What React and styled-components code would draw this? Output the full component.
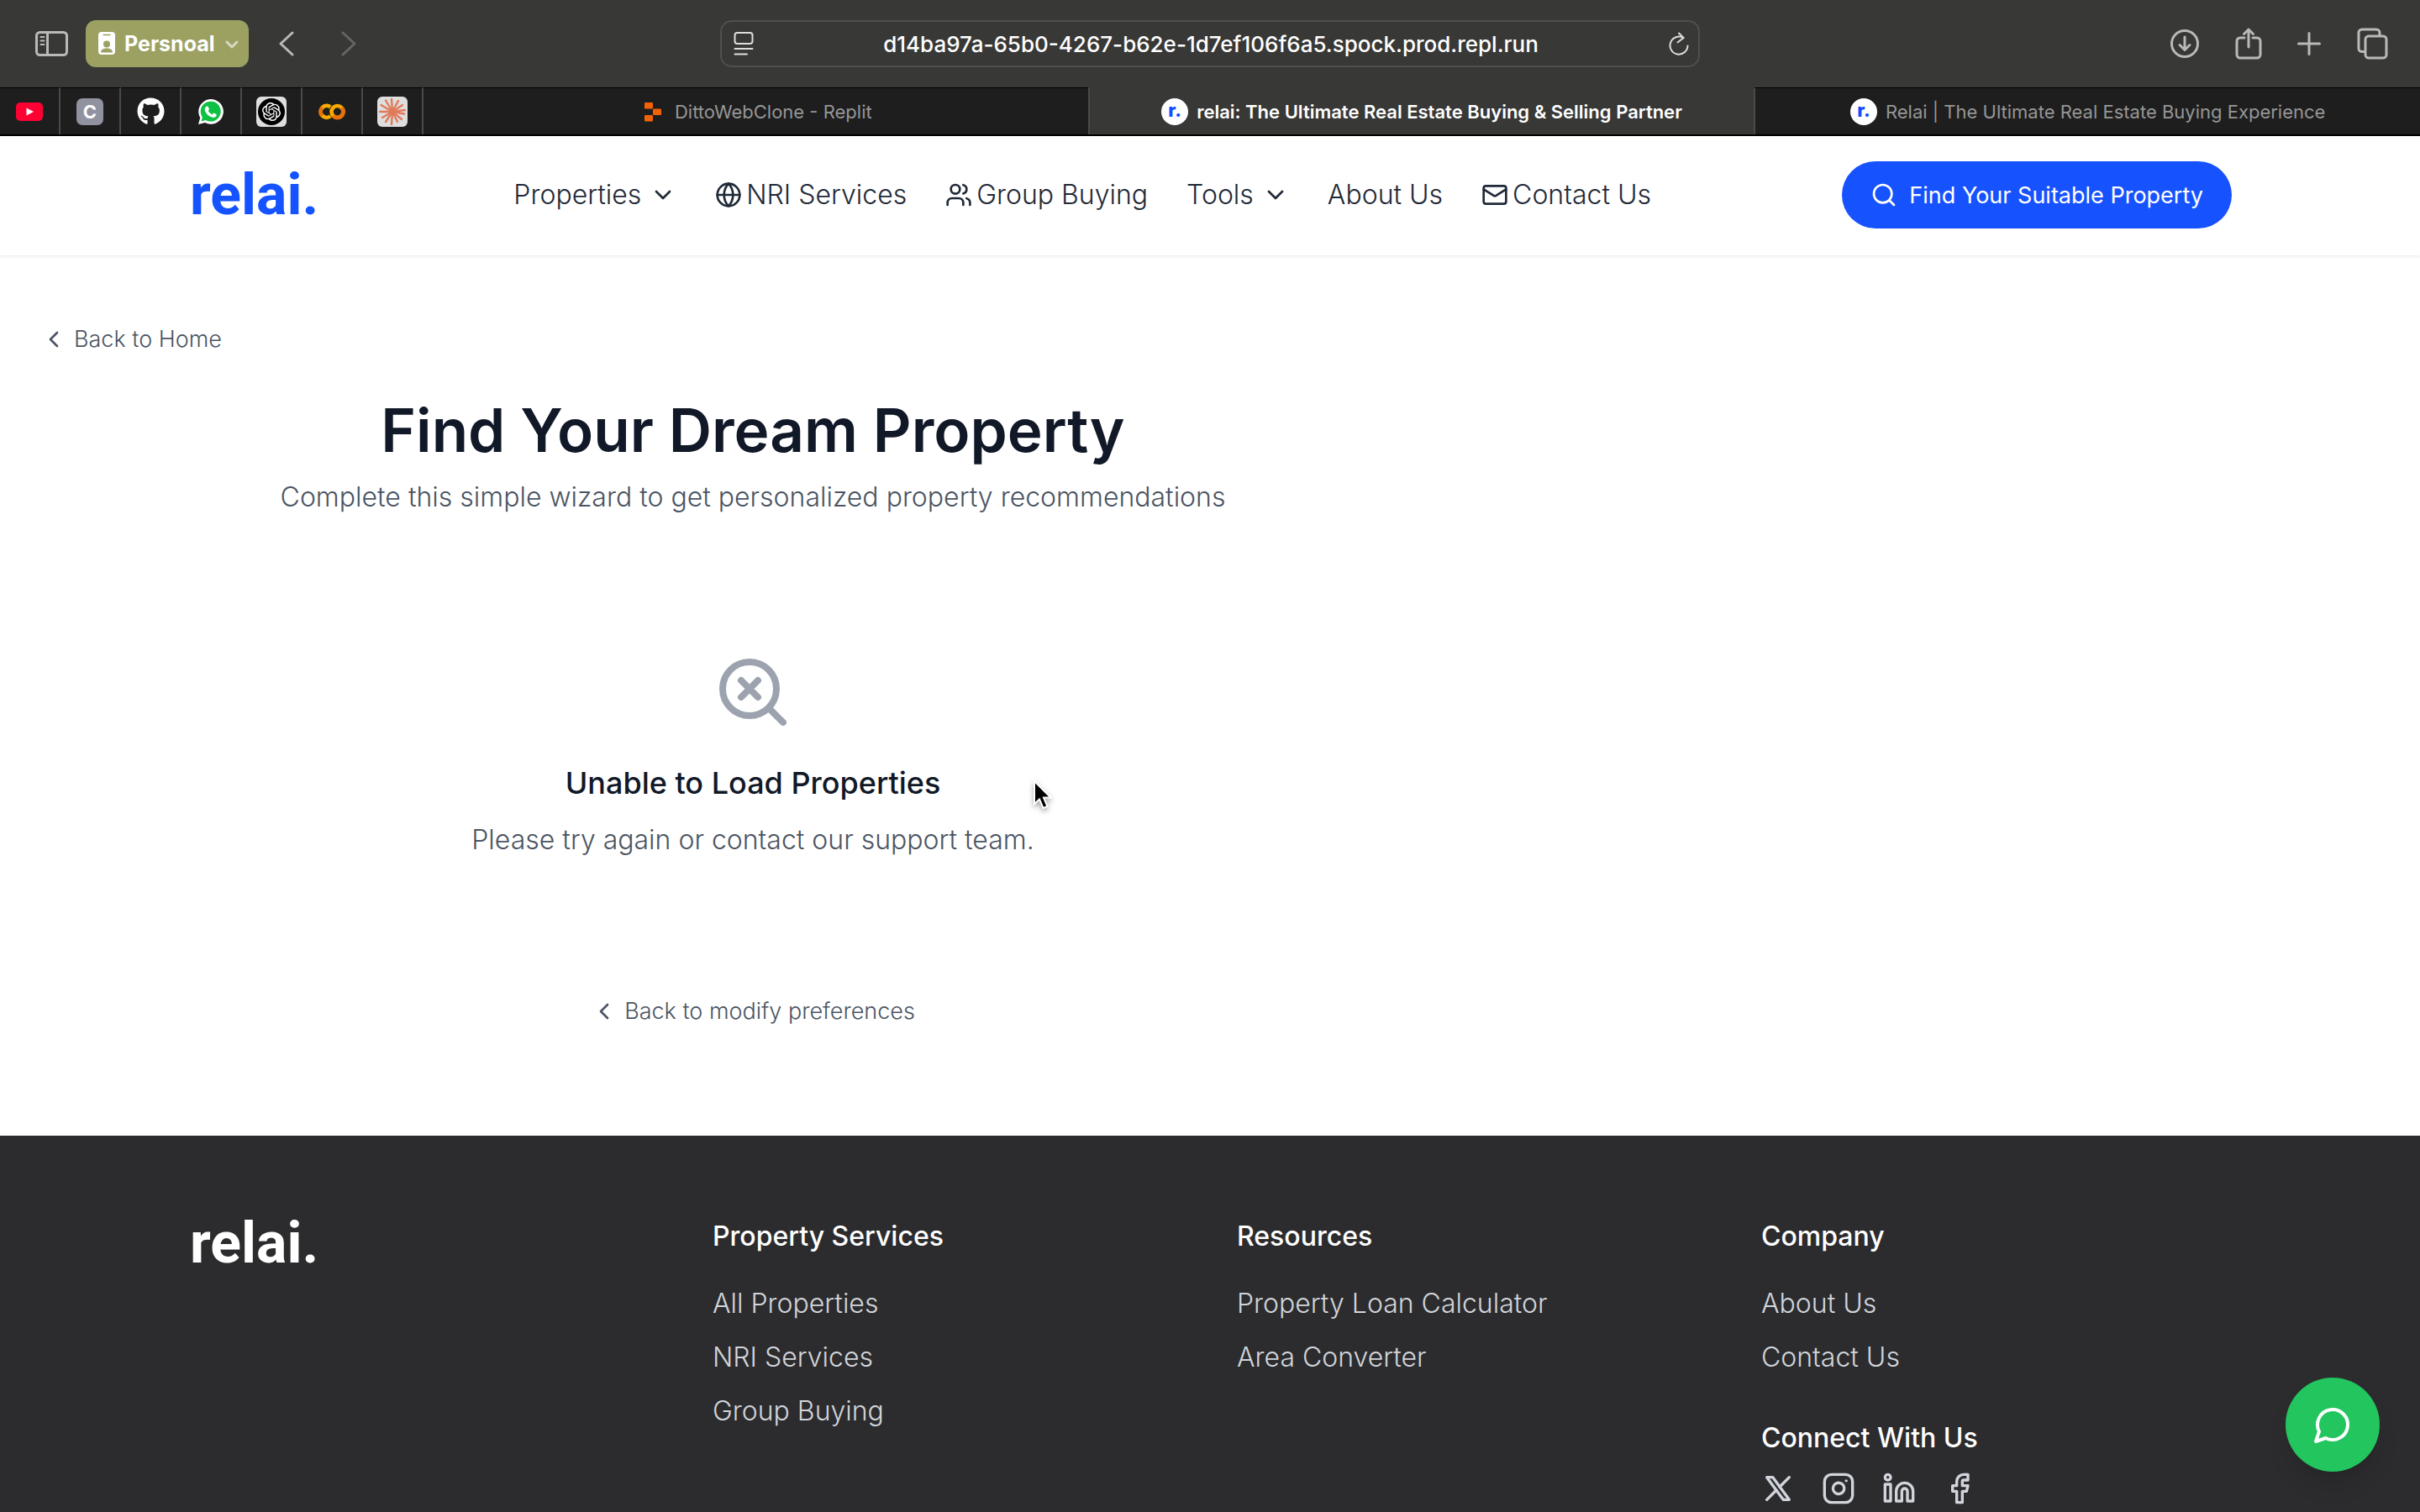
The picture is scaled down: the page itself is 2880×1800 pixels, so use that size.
import React from "react";
import styled, { createGlobalStyle } from "styled-components";
import { ChevronDown, ChevronLeft, Facebook, Globe, Instagram, Linkedin, Mail, Search } from "lucide-react";
import { FaGithub } from "react-icons/fa";
import { SiOpenai } from "react-icons/si";

const GlobalStyle = createGlobalStyle`
  *, *::before, *::after { box-sizing: border-box; }
  body { margin: 0; background: #fff; font-family: Inter, "Liberation Sans", sans-serif; }
  button, input { font: inherit; }
  svg { display: block; flex: none; }
`;

const Page = styled.div`
  min-height: 100vh;
  display: flex;
  flex-direction: column;
`;

/* Browser chrome */
const Chrome = styled.div`
  background: #383836;
  color: #b9b9b7;
  border-bottom: 2px solid #000;
`;

const Toolbar = styled.div`
  height: 104px;
  display: grid;
  grid-template-columns: 1fr minmax(0, 1166px) 1fr;
  align-items: center;
`;

const ToolGroup = styled.div`
  display: flex;
  align-items: center;
  justify-content: ${(p) => (p.$end ? "flex-end" : "flex-start")};
  gap: ${(p) => p.$gap}px;
  padding: 0 38px 0 36px;
`;

const IconButton = styled.button`
  border: 0;
  padding: 0;
  background: none;
  color: inherit;
  display: flex;
  align-items: center;
  justify-content: center;
  opacity: ${(p) => (p.$dim ? 0.35 : 1)};
`;

const ProfileButton = styled.button`
  height: 56px;
  border: 0;
  border-radius: 12px;
  padding: 0 10px 0 14px;
  display: flex;
  align-items: center;
  gap: 10px;
  background: #9ca162;
  color: #fff;
  font-size: 25px;
  font-weight: 700;
`;

const AddressBar = styled.div`
  height: 56px;
  border: 2px solid #4f4f4d;
  border-radius: 14px;
  display: flex;
  align-items: center;
  padding: 0 10px 0 14px;
  color: #dededc;
`;

const AddressInput = styled.input`
  flex: 1;
  min-width: 0;
  border: 0;
  outline: 0;
  background: none;
  color: #fff;
  text-align: center;
  font-size: 26px;
  font-weight: 450;
`;

const TabStrip = styled.div`
  display: flex;
  height: 56px;
`;

const PinnedTab = styled.button`
  width: 72px;
  border: 0;
  border-top: 1px solid #000;
  border-right: 2px solid #4a4a48;
  padding: 0;
  background: #1e1e1e;
  display: flex;
  align-items: center;
  justify-content: center;
`;

const Tab = styled.button`
  flex: 1;
  min-width: 0;
  border: 0;
  border-top: 1px solid ${(p) => (p.$active ? "#383836" : "#000")};
  & + & { border-left: 2px solid #4a4a48; }
  background: ${(p) => (p.$active ? "#383836" : "#1e1e1e")};
  color: ${(p) => (p.$active ? "#fff" : "#969696")};
  font-size: 22px;
  font-weight: ${(p) => (p.$active ? 600 : 400)};
  display: flex;
  align-items: center;
  justify-content: center;
  gap: 10px;
  white-space: nowrap;
`;

const RelaiFavicon = styled.span`
  width: 32px;
  height: 32px;
  border-radius: 50%;
  background: #fff;
  color: #0f4dff;
  font-size: 22px;
  line-height: 28px;
  font-weight: 800;
  text-align: center;
`;

const LetterFavicon = styled.span`
  width: 32px;
  height: 32px;
  border-radius: 7px;
  background: #9192a0;
  color: #fff;
  font-size: 22px;
  line-height: 32px;
  font-weight: 700;
`;

const PlateFavicon = styled.span`
  width: 36px;
  height: 36px;
  border-radius: 6px;
  background: #dedede;
  display: flex;
  align-items: center;
  justify-content: center;
`;

const BlackDisc = styled.span`
  width: 32px;
  height: 32px;
  border-radius: 50%;
  background: #000;
  color: #fff;
  display: flex;
  align-items: center;
  justify-content: center;
`;

/* Site header */
const Header = styled.header`
  display: flex;
  align-items: center;
  justify-content: space-between;
  padding: 30px 224px 32px;
  background: #fff;
  box-shadow: 0 1px 4px rgba(0, 0, 0, 0.1);
`;

const Logo = styled.a`
  width: 160px;
  padding-left: 2px;
  font-family: Roboto, "Liberation Sans", sans-serif;
  font-size: 68px;
  line-height: 64px;
  font-weight: 700;
  text-decoration: none;
  color: ${(p) => (p.$light ? "#fff" : "#1453ff")};
`;

const Nav = styled.nav`
  display: flex;
  align-items: center;
  gap: 46px;
`;

const navItem = `
  display: flex;
  align-items: center;
  border: 0;
  padding: 0;
  background: none;
  color: #1f2937;
  font-size: 32px;
  line-height: 48px;
  font-weight: 300;
  text-decoration: none;
  white-space: nowrap;
`;
const NavLink = styled.a`${navItem} gap: 5px;`;
const NavMenu = styled.button`${navItem} gap: 10px;`;

const SearchButton = styled.button`
  height: 80px;
  border: 0;
  border-radius: 40px;
  padding: 0 34px;
  display: flex;
  align-items: center;
  gap: 14px;
  background: #1752ff;
  color: #fff;
  font-size: 27px;
  font-weight: 400;
  white-space: nowrap;
`;

/* Page content */
const Main = styled.main`
  padding: 80px 0 128px;
`;

const BackLink = styled.a`
  display: flex;
  align-items: center;
  gap: 8px;
  color: #4b5563;
  font-size: 27px;
  line-height: 40px;
  font-weight: 300;
  text-decoration: none;
`;

const BackRow = styled.div`
  display: flex;
  padding: 0 48px;
`;

const Wizard = styled.section`
  max-width: 1792px;
  padding-top: 48px;
  display: flex;
  flex-direction: column;
  align-items: center;
  text-align: center;
`;

const Title = styled.h1`
  margin: 0 0 16px;
  color: #111827;
  font-size: 71px;
  line-height: 80px;
  font-weight: 600;
`;

const Lead = styled.p`
  margin: 0;
  color: #4b5563;
  font-size: 32px;
  line-height: 48px;
  font-weight: 300;
`;

const EmptyState = styled.div`
  padding: 160px 0;
  display: flex;
  flex-direction: column;
  align-items: center;
  color: #9ca3af;
`;

const EmptyTitle = styled.h2`
  margin: 32px 0 16px;
  color: #111827;
  font-size: 36px;
  line-height: 56px;
  font-weight: 500;
`;

/* Footer */
const Footer = styled.footer`
  flex: 1;
  padding: 96px 224px 0;
  background: #2c2c2e;
  display: grid;
  grid-template-columns: repeat(4, 1fr);
  gap: 64px;
`;

const FooterHeading = styled.h3`
  margin: 0;
  color: #fff;
  font-size: 32px;
  line-height: 48px;
  font-weight: 500;
`;

const FooterList = styled.ul`
  list-style: none;
  margin: 32px 0 48px;
  padding: 0;
  display: grid;
  gap: 16px;
`;

const FooterLink = styled.a`
  display: block;
  color: #d1d5db;
  font-size: 32px;
  line-height: 48px;
  font-weight: 300;
  text-decoration: none;
`;

const SocialRow = styled.div`
  display: flex;
  gap: 32px;
  margin-top: 16px;
`;

const SocialLink = styled.a`
  color: #d1d5db;
`;

const ChatButton = styled.button`
  position: fixed;
  right: 48px;
  bottom: 48px;
  width: 112px;
  height: 112px;
  border: 0;
  border-radius: 50%;
  background: #22c55e;
  color: #fff;
  display: flex;
  align-items: center;
  justify-content: center;
  box-shadow: 0 20px 30px -6px rgba(0, 0, 0, 0.12), 0 8px 12px -8px rgba(0, 0, 0, 0.12);
`;

const Pointer = styled.svg`
  position: absolute;
  left: 1228px;
  top: 928px;
  filter: drop-shadow(0 3px 3px rgba(0, 0, 0, 0.35));
`;

const Stroke = ({ w, h, width = 3, children }) => (
  <svg width={w} height={h} viewBox={`0 0 ${w} ${h}`} fill="none" stroke="currentColor" strokeWidth={width} strokeLinecap="round" strokeLinejoin="round" aria-hidden="true">
    {children}
  </svg>
);

const SidebarIcon = () => (
  <Stroke w={50} h={32}>
    <rect x="7.5" y="2.5" width="36" height="27" rx="4" />
    <path d="M20.5 3v26" />
    <path d="M12.500 8h4M12.500 12.500h4M12.500 17h4" strokeWidth="2" />
  </Stroke>
);

const BadgeIcon = () => (
  <svg width="22" height="28" viewBox="0 0 22 28" aria-hidden="true">
    <rect x="1" y="0" width="20" height="27" rx="4" fill="#fff" />
    <path d="M7 3.500h8" stroke="#9ca162" strokeWidth="1.500" strokeLinecap="round" />
    <circle cx="11" cy="14.500" r="4" fill="#9ca162" />
    <path d="M4 24.500c0-3.400 3-4.900 7-4.900s7 1.500 7 4.900z" fill="#9ca162" />
  </svg>
);

const ReaderIcon = () => (
  <Stroke w={24} h={30} width={2}>
    <rect x="1.500" y="2" width="21" height="13" rx="3" />
    <path d="M1.500 21h21M1.500 27.500h14.500" />
  </Stroke>
);

const ReloadIcon = () => (
  <Stroke w={26} h={30} width={2}>
    <path d="M18.500 8.200A10.500 10.500 0 1 0 23.500 17.500" />
    <path d="M13 2.500l5.500 5.500-7 5.500" />
  </Stroke>
);

const DownloadIcon = () => (
  <Stroke w={36} h={36}>
    <circle cx="18" cy="18" r="15.500" />
    <path d="M18 10v15M12 19.500l6 6 6-6" />
  </Stroke>
);

const ShareIcon = () => (
  <Stroke w={32} h={40}>
    <path d="M11 13H6a4 4 0 0 0-4 4v16a4 4 0 0 0 4 4h20a4 4 0 0 0 4-4V17a4 4 0 0 0-4-4h-5" />
    <path d="M16 24V3M10.500 8.500L16 3l5.500 5.500" />
  </Stroke>
);

const PlusIcon = () => (
  <Stroke w={28} h={28}>
    <path d="M14 1.500v25M1.500 14h25" />
  </Stroke>
);

const TabsIcon = () => (
  <Stroke w={38} h={38}>
    <path d="M10.500 28.500H7a4 4 0 0 1-4-4V6a4 4 0 0 1 4-4h17a4 4 0 0 1 4 4v3" />
    <rect x="11" y="10" width="25" height="26" rx="4" />
  </Stroke>
);

const YoutubeIcon = () => (
  <svg width="32" height="22" viewBox="0 0 32 22" aria-hidden="true">
    <rect width="32" height="22" rx="5" fill="#ff0033" />
    <path d="M12.500 6.500v9l8.500-4.500z" fill="#fff" />
  </svg>
);

const WhatsappFavicon = () => (
  <svg width="32" height="32" viewBox="0 0 32 32" aria-hidden="true">
    <path d="M1 31l2.200-7.800A14.800 14.800 0 1 1 9 28.900z" fill="#fff" />
    <path d="M4.500 27.500l1.400-5A12 12 0 1 1 9.700 26z" fill="#0dc143" />
    <path d="M11.400 9.400c.6 0 1-.1 1.300.6l1.200 2.800c.2.500-.9 1.500-1.100 1.900.9 2 2.700 3.700 5 4.500.6-.4 1.200-1.800 1.800-1.600l2.900 1.400c.5.300.1 1.900-.3 2.600-1 1.300-3.100 1.700-5 1-4-1.200-7.300-4.400-8.400-8-.5-2.300.6-5 2.600-5.200z" fill="#fff" />
  </svg>
);

const ColabIcon = () => (
  <svg width="32" height="20" viewBox="0 0 32 20" fill="none" strokeWidth="4.600" aria-hidden="true">
    <path d="M14.200 4.500A7 7 0 1 0 14.200 15.300" stroke="#f9ab00" />
    <path d="M4.500 4.900A7 7 0 0 0 4.500 14.900" stroke="#e8710a" />
    <circle cx="22.500" cy="10" r="7" stroke="#f9ab00" />
    <path d="M27.500 5.100A7 7 0 0 1 17.500 14.900" stroke="#e8710a" />
  </svg>
);

const rays = [
  [15, 1], [23, 3], [28, 8], [31, 14], [30, 18.5], [27, 25], [22, 28], [15, 31],
  [8, 28], [4, 23], [1, 16], [2.5, 8], [8, 2.5],
];
const ClaudeIcon = () => (
  <svg width="32" height="32" viewBox="0 0 32 32" stroke="#e07b5a" strokeWidth="2.400" strokeLinecap="round" aria-hidden="true">
    {rays.map(([x, y]) => <line key={`${x}-${y}`} x1="16" y1="16" x2={x} y2={y} />)}
    <circle cx="16" cy="16" r="3" fill="#e07b5a" />
  </svg>
);

const ReplitIcon = () => (
  <svg width="32" height="32" viewBox="0 0 32 32" fill="#f26207" aria-hidden="true">
    <rect x="6" y="5" width="10" height="7.500" rx="1" />
    <rect x="16" y="12.500" width="10" height="7.500" rx="1" />
    <rect x="6" y="20" width="10" height="7.500" rx="1" />
  </svg>
);

const lucideStroke = { viewBox: "0 0 24 24", fill: "none", stroke: "currentColor", strokeWidth: 2, strokeLinecap: "round", strokeLinejoin: "round", "aria-hidden": true };

const UsersIcon = () => (
  <svg width="32" height="32" {...lucideStroke}>
    <path d="M16 21v-2a4 4 0 0 0-4-4H6a4 4 0 0 0-4 4v2" />
    <circle cx="9" cy="7" r="4" />
    <path d="M22 21v-2a4 4 0 0 0-3-3.870" />
    <path d="M16 3.130a4 4 0 0 1 0 7.750" />
  </svg>
);

const SearchXIcon = () => (
  <svg width="96" height="96" {...lucideStroke}>
    <path d="m13.500 8.500-5 5M8.500 8.500l5 5" />
    <circle cx="11" cy="11" r="8" />
    <path d="m21 21-4.300-4.300" />
  </svg>
);

const BrandXIcon = () => (
  <svg width="40" height="40" {...lucideStroke}>
    <path d="M4 4l11.733 16H20L8.267 4z" />
    <path d="M4 20l6.768-6.768m2.460-2.460L20 4" />
  </svg>
);

const ChatIcon = () => (
  <svg width="48" height="48" {...lucideStroke}>
    <path d="M7.900 20A9 9 0 1 0 4 16.100L2 22Z" />
  </svg>
);

const footerColumns = [
  { title: "Property Services", links: ["All Properties", "NRI Services", "Group Buying"] },
  { title: "Resources", links: ["Property Loan Calculator", "Area Converter"] },
  { title: "Company", links: ["About Us", "Contact Us"], social: true },
];

const socials = [
  ["X", <BrandXIcon />],
  ["Instagram", <Instagram size={40} />],
  ["LinkedIn", <Linkedin size={40} />],
  ["Facebook", <Facebook size={40} />],
];

const pinned = [
  ["YouTube", <YoutubeIcon />],
  ["C", <LetterFavicon>C</LetterFavicon>],
  ["GitHub", <FaGithub size={33} color="#fff" />],
  ["WhatsApp", <WhatsappFavicon />],
  ["ChatGPT", <PlateFavicon><BlackDisc><SiOpenai size={22} /></BlackDisc></PlateFavicon>],
  ["Colab", <ColabIcon />],
  ["Claude", <PlateFavicon><ClaudeIcon /></PlateFavicon>],
];

export default function App() {
  return (
    <Page>
      <GlobalStyle />
      <Chrome>
        <Toolbar>
          <ToolGroup $gap={16}>
            <IconButton aria-label="Sidebar"><SidebarIcon /></IconButton>
            <ProfileButton>
              <BadgeIcon />
              Persnoal
              <Stroke w={20} h={20}><path d="M4 8l6 6 6-6" opacity="0.6" /></Stroke>
            </ProfileButton>
            <IconButton aria-label="Back"><Stroke w={56} h={32}><path d="M36 3L22 16l14 13" /></Stroke></IconButton>
            <IconButton aria-label="Forward" $dim><Stroke w={56} h={32}><path d="M24 3l14 13-14 13" /></Stroke></IconButton>
          </ToolGroup>
          <AddressBar>
            <ReaderIcon />
            <AddressInput aria-label="Address" defaultValue="d14ba97a-65b0-4267-b62e-1d7ef106f6a5.spock.prod.repl.run" />
            <IconButton aria-label="Reload"><ReloadIcon /></IconButton>
          </AddressBar>
          <ToolGroup $end $gap={42}>
            <IconButton aria-label="Downloads"><DownloadIcon /></IconButton>
            <IconButton aria-label="Share"><ShareIcon /></IconButton>
            <IconButton aria-label="New tab"><PlusIcon /></IconButton>
            <IconButton aria-label="Tab overview"><TabsIcon /></IconButton>
          </ToolGroup>
        </Toolbar>
        <TabStrip>
          {pinned.map(([name, icon]) => <PinnedTab key={name} aria-label={name}>{icon}</PinnedTab>)}
          <Tab><ReplitIcon />DittoWebClone - Replit</Tab>
          <Tab $active><RelaiFavicon>r.</RelaiFavicon>relai: The Ultimate Real Estate Buying &amp; Selling Partner</Tab>
          <Tab><RelaiFavicon>r.</RelaiFavicon>Relai | The Ultimate Real Estate Buying Experience</Tab>
        </TabStrip>
      </Chrome>

      <Header>
        <Logo href="#">relai.</Logo>
        <Nav>
          <NavMenu>Properties<ChevronDown size={32} /></NavMenu>
          <NavLink href="#"><Globe size={32} />NRI Services</NavLink>
          <NavLink href="#"><UsersIcon />Group Buying</NavLink>
          <NavMenu>Tools<ChevronDown size={32} /></NavMenu>
          <NavLink href="#">About Us</NavLink>
          <NavLink href="#"><Mail size={32} />Contact Us</NavLink>
        </Nav>
        <SearchButton><Search size={32} />Find Your Suitable Property</SearchButton>
      </Header>

      <Main>
        <BackRow>
          <BackLink href="#"><ChevronLeft size={32} />Back to Home</BackLink>
        </BackRow>
        <Wizard>
          <Title>Find Your Dream Property</Title>
          <Lead>Complete this simple wizard to get personalized property recommendations</Lead>
          <EmptyState>
            <SearchXIcon />
            <EmptyTitle>Unable to Load Properties</EmptyTitle>
            <Lead>Please try again or contact our support team.</Lead>
          </EmptyState>
          <BackLink href="#"><ChevronLeft size={32} />Back to modify preferences</BackLink>
        </Wizard>
      </Main>

      <Footer>
        <Logo href="#" $light>relai.</Logo>
        {footerColumns.map(({ title, links, social }) => (
          <div key={title}>
            <FooterHeading>{title}</FooterHeading>
            <FooterList>
              {links.map((text) => <li key={text}><FooterLink href="#">{text}</FooterLink></li>)}
            </FooterList>
            {social && (
              <>
                <FooterHeading>Connect With Us</FooterHeading>
                <SocialRow>
                  {socials.map(([name, icon]) => <SocialLink key={name} href="#" aria-label={name}>{icon}</SocialLink>)}
                </SocialRow>
              </>
            )}
          </div>
        ))}
      </Footer>

      <ChatButton aria-label="Chat"><ChatIcon /></ChatButton>
      <Pointer width="28" height="38" viewBox="0 0 28 38" aria-hidden="true">
        <path d="M3 2v27l6-5.500 4.500 10.500 5-2-4.500-10.500h8.500z" fill="#000" stroke="#fff" strokeWidth="2" />
      </Pointer>
    </Page>
  );
}
